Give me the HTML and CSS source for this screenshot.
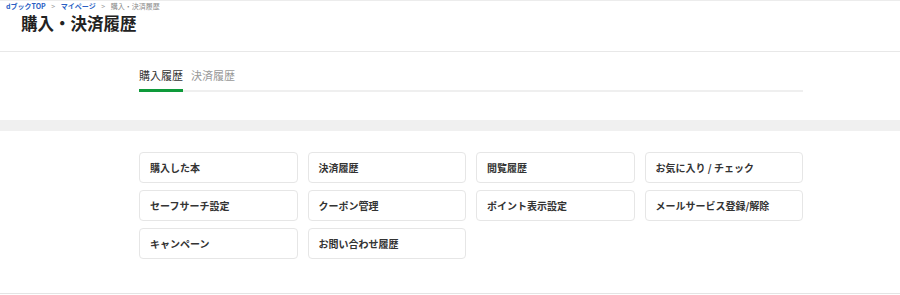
FILE: index.html
```html
<!DOCTYPE html>
<html lang="ja">
<head>
    <meta charset="UTF-8">
    <title>購入・決済履歴</title>
    <link rel="stylesheet" href="styles.css">
</head>
<body>
    <div class="header">
        <div class="breadcrumb">
            <a href="#">dブックTOP</a>
            <span class="sep">&gt;</span>
            <a href="#">マイページ</a>
            <span class="sep">&gt;</span>
            <span>購入・決済履歴</span>
        </div>
        <h1 class="title">購入・決済履歴</h1>
    </div>

    <div class="tabs">
        <div class="tab active">購入履歴</div>
        <div class="tab">決済履歴</div>
    </div>

    <div class="band"></div>

    <div class="menu">
        <div class="menu-grid">
            <a class="menu-item" href="#">購入した本</a>
            <a class="menu-item" href="#">決済履歴</a>
            <a class="menu-item" href="#">閲覧履歴</a>
            <a class="menu-item" href="#">お気に入り / チェック</a>
            <a class="menu-item" href="#">セーフサーチ設定</a>
            <a class="menu-item" href="#">クーポン管理</a>
            <a class="menu-item" href="#">ポイント表示設定</a>
            <a class="menu-item" href="#">メールサービス登録/解除</a>
            <a class="menu-item" href="#">キャンペーン</a>
            <a class="menu-item" href="#">お問い合わせ履歴</a>
        </div>
    </div>
</body>
</html>
```

FILE: styles.css
```css
body {
    margin: 0;
    font-family: "Noto Sans CJK JP", "Noto Sans", sans-serif;
    color: #333;
    background-color: #fff;
}

a {
    text-decoration: none;
}

.header {
    border-bottom: 1px solid #e8e8e8;
    padding-bottom: 17px;
}

.breadcrumb {
    border-top: 1px solid #ececec;
    padding: 0 6px;
    height: 10px;
    font-size: 7px;
    line-height: 10px;
    color: #888;
    white-space: nowrap;
}

.breadcrumb a {
    color: #2b5fc4;
    font-weight: bold;
}

.breadcrumb .sep {
    margin: 0 4px;
    color: #999;
}

.title {
    margin: 0;
    padding: 1px 21px 0;
    font-size: 16.5px;
    line-height: 22px;
    font-weight: bold;
    color: #222;
}

.tabs {
    display: flex;
    gap: 8px;
    width: 664px;
    margin-left: 139px;
    border-bottom: 2px solid #efefef;
}

.tab {
    padding: 15px 0 6px;
    margin-bottom: -2px;
    font-size: 11px;
    line-height: 16px;
    color: #999;
    border-bottom: 3px solid transparent;
}

.tab.active {
    color: #333;
    border-bottom-color: #0e9a3a;
}

.band {
    margin-top: 28px;
    height: 11px;
    background-color: #f0f0f0;
}

.menu {
    padding: 21px 0 34px;
    border-bottom: 1px solid #e4e4e4;
}

.menu-grid {
    display: grid;
    grid-template-columns: repeat(4, 1fr);
    column-gap: 10px;
    row-gap: 7px;
    width: 664px;
    margin-left: 139px;
}

.menu-item {
    display: flex;
    align-items: center;
    height: 29px;
    padding: 0 10px;
    border: 1px solid #e6e6e6;
    border-radius: 4px;
    font-size: 10px;
    font-weight: bold;
    color: #333;
}
```
